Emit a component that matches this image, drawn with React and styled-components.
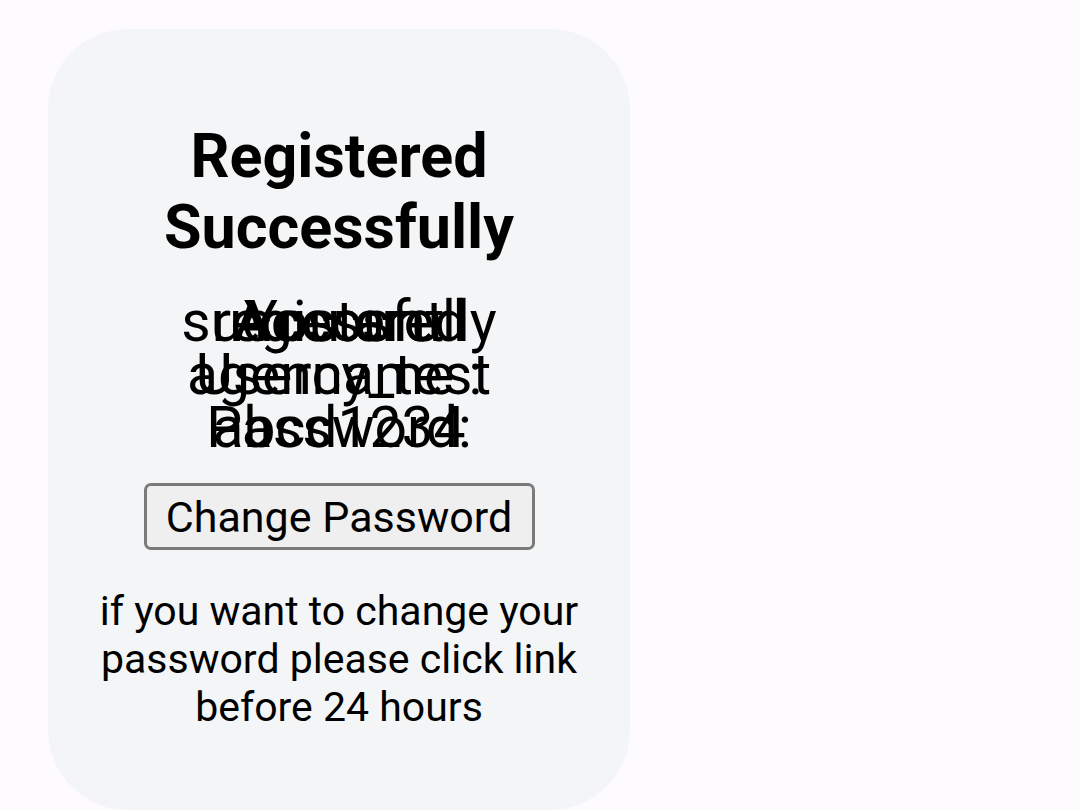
import React from "react";
import styled, { createGlobalStyle } from "styled-components";

const Global = createGlobalStyle`
  html, body { margin: 0; padding: 0; background: #fefbfe; }
  body { font-family: Roboto, "Noto Sans", Arial, sans-serif; color: #000; }
`;

const Page = styled.div`
  padding: 29px 0 0 48px;
`;

const Card = styled.section`
  width: 582px;
  height: 781px;
  box-sizing: border-box;
  background: #f3f5f6;
  border-radius: 80px;
  padding: 92px 40px 0;
  display: flex;
  flex-direction: column;
  align-items: center;
  text-align: center;
`;

const Title = styled.h2`
  margin: 0;
  font-size: 61px;
  line-height: 71px;
  font-weight: 700;
  width: 400px;
`;

const Details = styled.div`
  margin-top: 32px;
  display: flex;
  flex-direction: column;
`;

const Row = styled.div`
  display: grid;
  justify-items: center;
  font-size: 57px;
  line-height: 53px;
  white-space: nowrap;
`;

const Layer = styled.span`
  grid-area: 1 / 1;
`;

const Button = styled.button`
  margin-top: 29px;
  height: 67px;
  width: 391px;
  padding: 0;
  font-family: Roboto, Arial, sans-serif;
  font-size: 43px;
  color: #000;
  background: #efefef;
  border: 3px solid #7a7a7a;
  border-radius: 7px;
`;

const Note = styled.p`
  margin: 37px 0 0;
  font-size: 41px;
  line-height: 48px;
  width: 490px;
`;

const rows = [
  ["Account", "You are", "successfully", "registered"],
  ["Username :", "agency_test"],
  ["Password:", "abcd1234"],
];

export default function App() {
  return (
    <>
      <Global />
      <Page>
        <Card>
          <Title>Registered Successfully</Title>
          <Details>
            {rows.map((r, i) => (
              <Row key={i}>
                {r.map((t) => (
                  <Layer key={t}>{t}</Layer>
                ))}
              </Row>
            ))}
          </Details>
          <Button>Change Password</Button>
          <Note>if you want to change your password please click link before 24 hours</Note>
        </Card>
      </Page>
    </>
  );
}
